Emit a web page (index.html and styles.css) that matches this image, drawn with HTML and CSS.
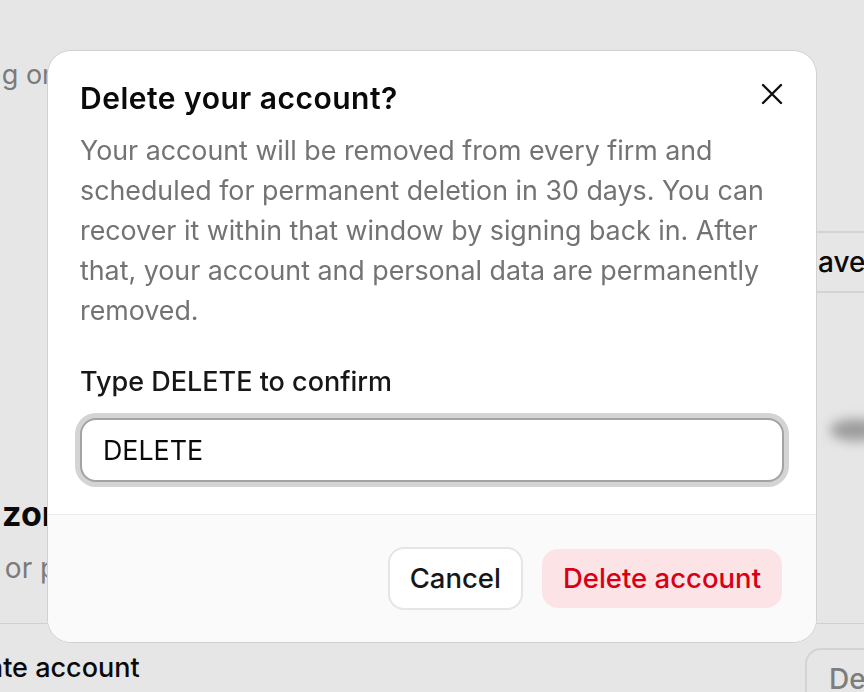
FILE: index.html
```html
<!DOCTYPE html>
<html lang="en">
<head>
    <meta charset="UTF-8">
    <meta name="viewport" content="width=device-width, initial-scale=1.0">
    <title>Account settings</title>
    <link rel="stylesheet" href="styles.css">
</head>
<body>
    <!-- Страница настроек под модалкой -->
    <main class="settings">
        <p class="setting-note">Billing or payroll notices are sent to this address.</p>

        <div class="setting-row save-row">
            <span></span>
            <button class="btn-outline">Save</button>
        </div>

        <div class="avatar-blur"></div>

        <section class="danger">
            <h2 class="danger-title">Danger zone</h2>
            <p class="danger-desc">Deactivate or permanently delete your account.</p>
            <div class="divider"></div>
            <div class="setting-row danger-row">
                <span class="danger-row-title">Deactivate account</span>
                <button class="btn-outline muted">Deactivate</button>
            </div>
        </section>
    </main>

    <!-- Модалка удаления -->
    <div class="overlay">
        <div class="dialog" role="dialog" aria-labelledby="dialog-title">
            <div class="dialog-body">
                <div class="dialog-head">
                    <h1 class="dialog-title" id="dialog-title">Delete your account?</h1>
                    <button class="dialog-close" aria-label="Close">
                        <svg width="24" height="24" viewBox="0 0 24 24" fill="none" stroke="currentColor" stroke-width="2.4" stroke-linecap="round">
                            <path d="M3 3L21 21M21 3L3 21"/>
                        </svg>
                    </button>
                </div>
                <p class="dialog-text">Your account will be removed from every firm and scheduled for permanent deletion in 30 days. You can recover it within that window by signing back in. After that, your account and personal data are permanently removed.</p>

                <label class="field-label" for="confirm">Type DELETE to confirm</label>
                <input class="field-input" id="confirm" type="text" value="DELETE">
            </div>

            <div class="dialog-foot">
                <button class="btn btn-cancel">Cancel</button>
                <button class="btn btn-danger">Delete account</button>
            </div>
        </div>
    </div>
</body>
</html>
```

FILE: styles.css
```css
body {
    margin: 0;
    font-family: Inter, "Liberation Sans", sans-serif;
    background-color: #e6e6e6;
    color: #0a0a0a;
    overflow: hidden;
}

/* Фон: страница настроек */
.settings {
    width: 864px;
}

.setting-note {
    margin: 55px 0 0 -58px;
    font-size: 27px;
    line-height: 40px;
    color: #7b7b7b;
    white-space: nowrap;
}

.setting-row {
    display: grid;
    align-items: start;
}

.save-row {
    margin-top: 136px;
    grid-template-columns: 776px max-content;
}

.btn-outline {
    height: 62px;
    padding: 0 22px;
    background: transparent;
    border: 2px solid #d3d3d3;
    border-radius: 16px;
    font-family: inherit;
    font-size: 28px;
    font-weight: 500;
    color: #0a0a0a;
    white-space: nowrap;
}

.btn-outline.muted {
    color: #7d7d7d;
}

.avatar-blur {
    margin: 126px 0 0 830px;
    width: 52px;
    height: 22px;
    border-radius: 50%;
    background-color: #9c9c9c;
    filter: blur(6px);
}

.danger {
    margin-top: 53px;
}

.danger-title {
    margin: 0 0 0 -127px;
    font-size: 34px;
    line-height: 40px;
    font-weight: 700;
    white-space: nowrap;
}

.danger-desc {
    margin: 14px 0 0 -144px;
    font-size: 28px;
    line-height: 40px;
    color: #7b7b7b;
    white-space: nowrap;
}

.divider {
    margin-top: 35px;
    border-top: 1px solid #d0d0d0;
}

.danger-row {
    margin-top: 24px;
    grid-template-columns: 805px max-content;
}

.danger-row-title {
    margin-left: -110px;
    font-size: 27px;
    line-height: 40px;
    font-weight: 500;
    white-space: nowrap;
}

/* Модалка */
.overlay {
    position: fixed;
    inset: 0;
    display: flex;
    align-items: center;
    justify-content: center;
}

.dialog {
    width: 770px;
    box-sizing: border-box;
    background-color: #fff;
    border: 1px solid #d1d1d1;
    border-radius: 24px;
    overflow: hidden;
}

.dialog-body {
    padding: 32px;
}

.dialog-head {
    display: flex;
    justify-content: space-between;
    align-items: flex-start;
}

.dialog-title {
    margin: 0;
    font-size: 30px;
    line-height: 30px;
    font-weight: 600;
    letter-spacing: 0.5px;
}

.dialog-close {
    width: 24px;
    height: 24px;
    margin-top: -1px;
    padding: 0;
    border: none;
    background: none;
    color: #111;
    display: flex;
    align-items: center;
    justify-content: center;
    cursor: pointer;
}

.dialog-text {
    margin: 17px 0 32px;
    font-size: 26.8px;
    line-height: 40px;
    color: #737373;
}

.field-label {
    display: block;
    margin-bottom: 16px;
    font-size: 27px;
    line-height: 40px;
    font-weight: 500;
    color: #171717;
}

.field-input {
    display: block;
    width: 100%;
    height: 64px;
    box-sizing: border-box;
    padding: 0 21px;
    border: 2px solid #a3a3a3;
    border-radius: 16px;
    box-shadow: 0 0 0 5px #d4d4d4;
    outline: none;
    background-color: #fff;
    font-family: inherit;
    font-size: 26.8px;
    color: #0a0a0a;
}

.dialog-foot {
    display: flex;
    justify-content: flex-end;
    align-items: center;
    gap: 19px;
    padding: 32px 34px 32px 32px;
    border-top: 1px solid #ebebeb;
    background-color: #fafafa;
}

.btn {
    font-family: inherit;
    font-size: 27.5px;
    font-weight: 500;
    border-radius: 16px;
    cursor: pointer;
}

.btn-cancel {
    height: 63px;
    padding: 0 20px;
    background-color: #fff;
    border: 2px solid #e5e5e5;
    color: #171717;
}

.btn-danger {
    height: 59px;
    padding: 0 21px;
    background-color: #fce4e6;
    border: none;
    color: #d90016;
}
```
